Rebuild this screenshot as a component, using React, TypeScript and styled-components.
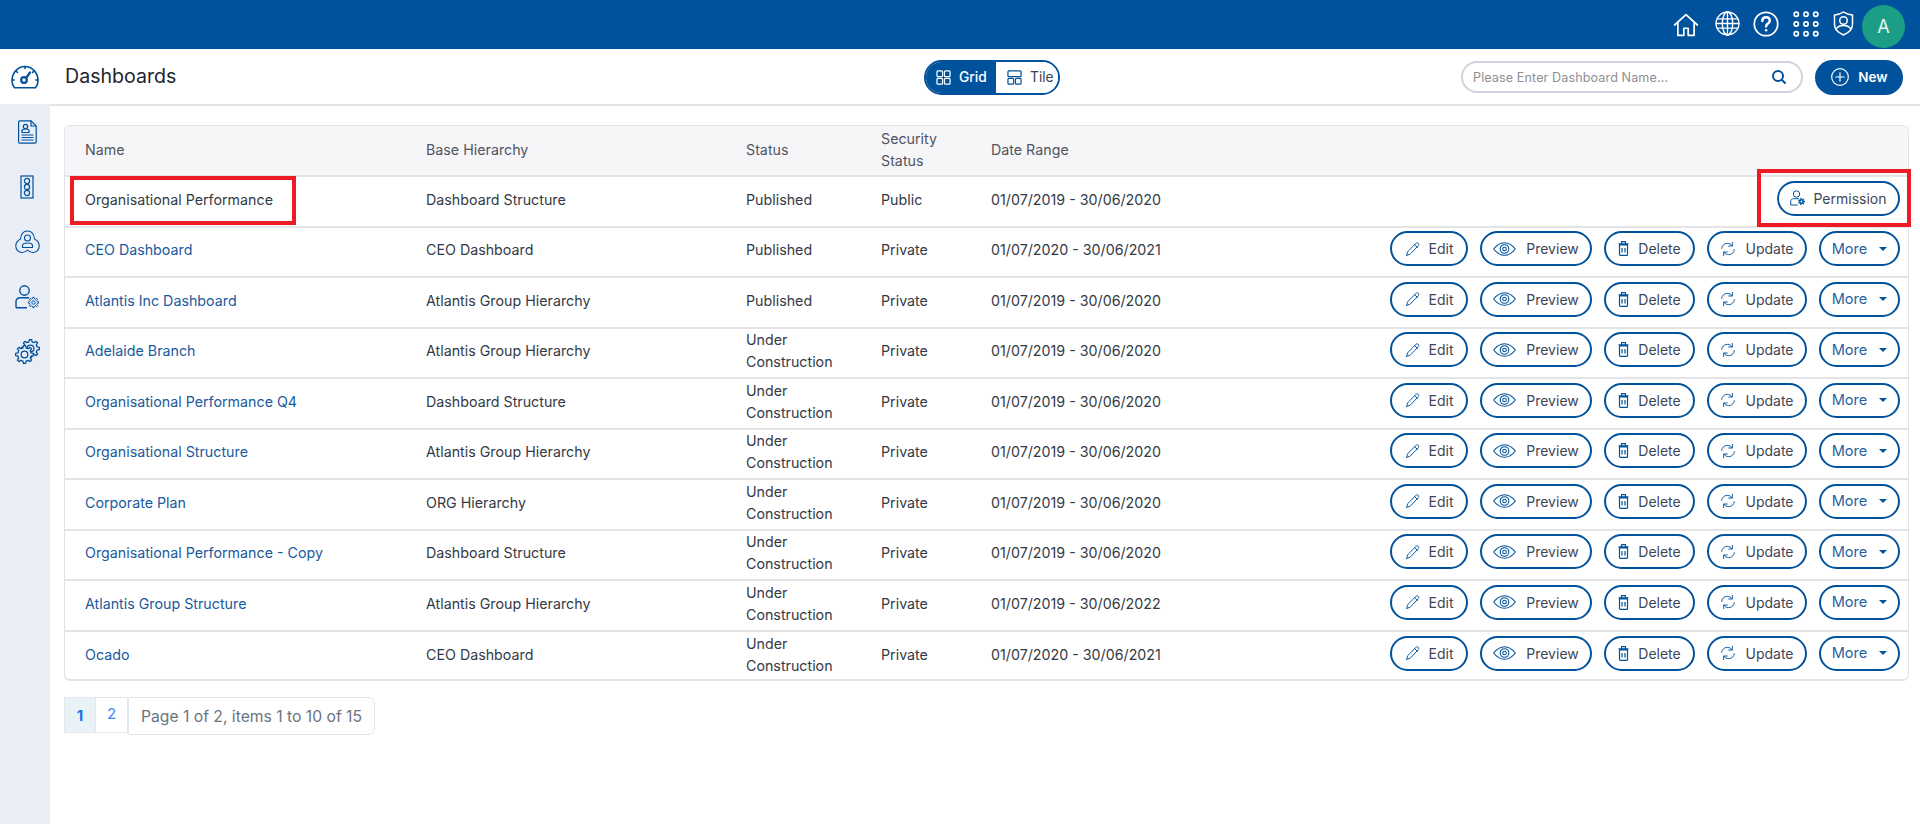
import React from "react";
import styled, { createGlobalStyle } from "styled-components";

const BLUE = "#00529c";
const SIDE_BG = "#e9edf6";

const Global = createGlobalStyle`
  html, body { margin: 0; padding: 0; height: 100%; background: #fff; }
  body { font-family: Inter, "Liberation Sans", sans-serif; font-size: 14.25px; color: #333a45; }
  #root { height: 100%; }
  * { box-sizing: border-box; }
`;

const Page = styled.div`
  position: relative;
  display: flex;
  flex-direction: column;
  height: 824px;
  overflow: hidden;
`;

const TopBar = styled.header`
  height: 49px;
  flex: none;
  background: ${BLUE};
  display: flex;
  align-items: center;
  justify-content: flex-end;
  padding-right: 15px;
`;

const TopIcon = styled.span<{ $w: number; $lift?: number }>`
  display: flex;
  justify-content: center;
  width: ${(p) => p.$w}px;
  margin-top: ${(p) => p.$lift ?? -2}px;
  color: #fff;
`;

const Avatar = styled.div`
  width: 43px;
  height: 43px;
  margin-top: 3px;
  border-radius: 50%;
  background: #1b9e85;
  color: #e8f6f3;
  display: flex;
  align-items: center;
  justify-content: center;
  font-size: 18px;
`;

const HeadRow = styled.div`
  height: 57px;
  flex: none;
  display: flex;
`;

const GaugeCell = styled.div`
  width: 50px;
  flex: none;
  display: flex;
  align-items: flex-start;
  justify-content: center;
  padding: 16px 0 0 0;
  color: ${BLUE};
`;

const HeadMain = styled.div`
  flex: 1;
  display: grid;
  grid-template-columns: 1fr auto 1fr;
  align-items: center;
  border-bottom: 2px solid #e4e4e7;
  padding: 1px 17px 0 15px;
`;

const Title = styled.h1`
  margin: -2px 0 0;
  font-size: 19.6px;
  font-weight: 400;
  color: #22262e;
`;

const Toggle = styled.div`
  display: flex;
  width: 136px;
  height: 35px;
  border: 2px solid ${BLUE};
  border-radius: 18px;
  overflow: hidden;
  margin-left: 16px;
`;

const ToggleItem = styled.div<{ $on?: boolean }>`
  display: flex;
  align-items: center;
  gap: 8px;
  padding-left: ${(p) => (p.$on ? 10 : 11)}px;
  width: ${(p) => (p.$on ? 70 : 62)}px;
  background: ${(p) => (p.$on ? BLUE : "#fff")};
  color: ${(p) => (p.$on ? "#fff" : "#3b4252")};
  font-size: 13.8px;
  font-weight: ${(p) => (p.$on ? 500 : 400)};
`;

const HeadRight = styled.div`
  display: flex;
  justify-content: flex-end;
  align-items: center;
  gap: 12px;
`;

const Search = styled.div`
  width: 342px;
  height: 32px;
  border: 2px solid #cfd5de;
  border-radius: 16px;
  display: flex;
  align-items: center;
  justify-content: space-between;
  padding: 0 14px 0 10px;
  font-size: 12.6px;
  color: #8f8f94;
  letter-spacing: 0.1px;
`;

const NewButton = styled.button`
  width: 88px;
  height: 35px;
  border: 0;
  border-radius: 18px;
  background: ${BLUE};
  color: #fff;
  display: flex;
  align-items: center;
  justify-content: center;
  gap: 8px;
  font: 600 13.5px Inter, sans-serif;
`;

const Body = styled.div`
  flex: 1;
  display: flex;
  min-height: 0;
`;

const Sidebar = styled.nav`
  width: 50px;
  flex: none;
  margin-top: -2px;
  background: ${SIDE_BG};
  display: flex;
  flex-direction: column;
  align-items: center;
  color: ${BLUE};
  padding: 9px 0 0 4px;
  gap: 18px;
`;

const SideIcon = styled.span`
  display: flex;
  height: 37px;
  align-items: center;
`;

const Main = styled.main`
  flex: 1;
  padding: 19px 11px 0 14px;
  min-width: 0;
`;

const Card = styled.div`
  border: 1px solid #e2e3e8;
  border-bottom-width: 2px;
  border-radius: 6px;
  overflow: hidden;
`;

const columns = "341px 320px 135px 110px 300px 1fr";

const HeaderRow = styled.div`
  display: grid;
  grid-template-columns: ${columns};
  height: 51px;
  padding-bottom: 1px;
  align-items: center;
  background: #f6f6f9;
  border-bottom: 2px solid #e4e4e7;
  color: #50555f;
`;

const Row = styled.div`
  display: grid;
  grid-template-columns: ${columns};
  height: 50.5px;
  padding-bottom: 3px;
  align-items: center;
  border-bottom: 2px solid #e4e4e7;
  &:last-child { border-bottom: 0; height: 47.5px; padding-bottom: 1px; }
`;

const Cell = styled.div`
  padding-left: 20px;
  line-height: 22px;
`;

const NameCell = styled(Cell)<{ $link?: boolean }>`
  color: ${(p) => (p.$link ? "#1a5a9e" : "#333a45")};
`;

const Actions = styled.div`
  display: flex;
  justify-content: flex-end;
  gap: 12px;
  padding-right: 8px;
  margin-top: -3px;
`;

const Pill = styled.button<{ $w: number; $gap?: number; $blue?: boolean }>`
  width: ${(p) => p.$w}px;
  height: 35px;
  border: 2px solid ${BLUE};
  border-radius: 18px;
  background: #fff;
  display: flex;
  align-items: center;
  justify-content: center;
  gap: ${(p) => p.$gap ?? 8}px;
  padding: 0;
  flex: none;
  font: 400 ${(p) => (p.$blue ? 14.6 : 14)}px Inter, sans-serif;
  color: ${(p) => (p.$blue ? "#2a5f9e" : "#3e4656")};
  svg { color: ${BLUE}; flex: none; }
`;

const Pager = styled.div`
  display: flex;
  align-items: flex-start;
  margin-top: 16px;
`;

const PageNum = styled.div<{ $on?: boolean }>`
  width: 32px;
  height: 36px;
  display: flex;
  align-items: center;
  justify-content: center;
  border: 1px solid #e2e5ec;
  border-left-width: ${(p) => (p.$on ? 1 : 0)}px;
  background: ${(p) => (p.$on ? "#e9f2f6" : "#fff")};
  color: ${(p) => (p.$on ? "#1672ee" : "#3d8af2")};
  font-weight: ${(p) => (p.$on ? 700 : 400)};
  font-size: 15px;
  padding-bottom: ${(p) => (p.$on ? 0 : 3)}px;
`;

const PageInfo = styled.div`
  width: 247px;
  height: 38px;
  display: flex;
  align-items: center;
  justify-content: center;
  border: 1px solid #e2e5ec;
  border-radius: 0 6px 6px 0;
  color: #6b7380;
  font-size: 15.7px;
`;

const RedBox = styled.div<{ $x: number; $y: number; $w: number; $h: number }>`
  position: absolute;
  left: ${(p) => p.$x}px;
  top: ${(p) => p.$y}px;
  width: ${(p) => p.$w}px;
  height: ${(p) => p.$h}px;
  border: 4px solid #ed1c24;
  pointer-events: none;
`;

const Svg = ({ s = 20, children, w = 1.5 }: { s?: number; children: React.ReactNode; w?: number }) => (
  <svg width={s} height={s} viewBox="0 0 24 24" fill="none" stroke="currentColor" strokeWidth={w} strokeLinecap="round" strokeLinejoin="round">
    {children}
  </svg>
);

function gearPath(cx: number, cy: number, ro: number, ri: number, teeth: number) {
  const pts: string[] = [];
  const step = (Math.PI * 2) / teeth;
  for (let i = 0; i < teeth; i++) {
    const a = i * step;
    const offs: [number, number][] = [
      [-0.3, ri],
      [-0.16, ro],
      [0.16, ro],
      [0.3, ri],
    ];
    offs.forEach(([o, r]) => {
      const t = a + o * step;
      pts.push(`${(cx + r * Math.cos(t)).toFixed(2)} ${(cy + r * Math.sin(t)).toFixed(2)}`);
    });
  }
  return `M${pts.join("L")}Z`;
}

const HomeIcon = () => (
  <Svg s={26} w={1.6}>
    <path d="M1.500 12 12 2.500 22.500 12M4.500 10v11.500h5.500v-6.500h4v6.500h5.500V10" />
  </Svg>
);
const GlobeIcon = () => (
  <Svg s={25} w={1.3}>
    <circle cx="12" cy="12" r="11" />
    <ellipse cx="12" cy="12" rx="5" ry="11" />
    <path d="M12 1v22M2.400 7.500h19.200M2.400 16.500h19.200M1 12h22" />
  </Svg>
);
const HelpIcon = () => (
  <Svg s={26} w={1.6}>
    <circle cx="12" cy="12" r="10.800" />
    <path d="M8.600 9.200c0-2 1.500-3.400 3.500-3.400s3.400 1.300 3.400 3.100c0 2.600-3.400 2.700-3.400 5.300" strokeWidth="2.200" />
    <circle cx="12.100" cy="17.800" r="1.200" fill="currentColor" stroke="none" />
  </Svg>
);
const DotsIcon = () => (
  <Svg s={26} w={1.5}>
    {[3, 12, 21].map((y) =>
      [3, 12, 21].map((x) => <circle key={`${x}-${y}`} cx={x} cy={y} r="2" />)
    )}
  </Svg>
);
const ShieldIcon = () => (
  <svg width="21" height="25" viewBox="0 0 21 25" fill="none" stroke="currentColor" strokeWidth="1.500" strokeLinejoin="round">
    <path d="M10.500 1c2.500 1.800 5 2.600 9 2.900v9.600c0 4.800-3.800 8.300-9 10.500-5.200-2.200-9-5.700-9-10.500V3.900c4-.3 6.500-1.100 9-2.900Z" />
    <circle cx="10.500" cy="9.500" r="3.800" />
    <path d="M3 18.500c1.200-2.700 4-4 7.500-4s6.300 1.300 7.500 4" />
  </svg>
);
const SearchIcon = () => (
  <svg width="16" height="16" viewBox="0 0 16 16" fill="none" stroke={BLUE} strokeWidth="2" strokeLinecap="round">
    <circle cx="7" cy="7" r="5" />
    <path d="m11 11 3 3" />
  </svg>
);
const PlusCircleIcon = () => (
  <Svg s={20} w={1.4}>
    <circle cx="12" cy="12" r="10" />
    <path d="M12 7v10M7 12h10" />
  </Svg>
);
const GridIcon = () => (
  <svg width="15" height="15" viewBox="0 0 16 16" fill="none" stroke="currentColor" strokeWidth="1.300">
    <rect x="1" y="1" width="6" height="6" rx="1" />
    <rect x="9" y="1" width="6" height="6" rx="1" />
    <rect x="1" y="9" width="6" height="6" rx="1" />
    <rect x="9" y="9" width="6" height="6" rx="1" />
  </svg>
);
const TileIcon = () => (
  <svg width="15" height="15" viewBox="0 0 16 16" fill="none" stroke={BLUE} strokeWidth="1.300">
    <rect x="1" y="1" width="14" height="6" rx="1" />
    <rect x="1" y="9" width="6" height="6" rx="1" />
    <rect x="9" y="9" width="6" height="6" rx="1" />
  </svg>
);
const GaugeIcon = () => (
  <svg width="28" height="24" viewBox="0 0 28 24" fill="none" stroke="currentColor" strokeWidth="1.600" strokeLinecap="round" strokeLinejoin="round">
    <path d="M3.500 22.800C1.800 20.800 1 18.300 1 15.500 1 7.800 6.800 1.500 14 1.500S27 7.800 27 15.500c0 2.800-.8 5.300-2.500 7.300Z" />
    <circle cx="13" cy="15" r="2.800" strokeWidth="2.200" />
    <path d="m15.500 12.500 3.500-5" strokeWidth="2.200" />
    <path d="M1 15h2.200M24.800 15H27M14 1.500v2M5 6l1.500 1.500M23 6l-1.500 1.500" />
  </svg>
);
const DocIcon = () => (
  <svg width="19" height="24" viewBox="0 0 19 24" fill="none" stroke="currentColor" strokeWidth="1.200">
    <path d="M1.500.8h11.500l5.200 5.200v16a1.200 1.200 0 0 1-1.200 1.200H1.800A1.200 1.200 0 0 1 .6 22V1.700Z" />
    <path d="M13 .8V6h5.200" />
    <circle cx="7.500" cy="6.500" r="2.200" />
    <path d="M4 12.500v-1.800c0-1 1-1.700 3.500-1.700s3.500.7 3.500 1.700v1.800ZM3.500 15h12M3.500 17.500h12M3.500 20h12" />
  </svg>
);
const TrafficIcon = () => (
  <svg width="14" height="24" viewBox="0 0 14 24" fill="none" stroke="currentColor" strokeWidth="1.200">
    <rect x="1" y="1" width="12" height="22" />
    <circle cx="7" cy="6" r="2.600" />
    <circle cx="7" cy="12" r="2.600" />
    <circle cx="7" cy="18" r="2.600" />
  </svg>
);
const OrgIcon = () => (
  <svg width="25" height="24" viewBox="0 0 25 24" fill="none" stroke="currentColor" strokeWidth="1.100">
    <path d="M5.500 9C6 3.500 9 1 12.500 1S19 3.500 19.500 9c3 1.500 4.700 4 4.700 7 0 3.800-2.700 6.500-6.200 6.500-2.200 0-4-1-5.500-2.300-1.500 1.300-3.300 2.300-5.500 2.300C3.500 22.500.8 19.800.8 16c0-3 1.700-5.500 4.700-7Z" />
    <circle cx="12.500" cy="8" r="3" />
    <path d="M7.500 17.500v-1.800c0-1.700 2-2.700 5-2.700s5 1 5 2.700v1.800Z" />
  </svg>
);
const UserCogIcon = () => (
  <svg width="24" height="24" viewBox="0 0 24 24" fill="none" stroke="currentColor" strokeWidth="1.400" strokeLinejoin="round">
    <circle cx="9.500" cy="5.500" r="4.700" />
    <path d="M1 22.800v-6c0-2.500 2-4 4.500-4h8.500M1 22.800h11" />
    <path d={gearPath(18.500, 17.500, 5.200, 3.900, 8)} strokeWidth="1" />
    <circle cx="18.500" cy="17.500" r="1.700" strokeWidth="1" />
  </svg>
);
const GearIcon = () => (
  <svg width="25" height="25" viewBox="0 0 25 25" fill={SIDE_BG} stroke="currentColor" strokeWidth="1.300" strokeLinejoin="round">
    <path d={gearPath(15.500, 9.500, 9, 6.800, 8)} />
    <circle cx="15.500" cy="9.500" r="3.400" />
    <path d={gearPath(9.500, 15.500, 9, 6.800, 8)} />
    <circle cx="9.500" cy="15.500" r="3.300" />
  </svg>
);
const PencilIcon = () => (
  <Svg s={16} w={1.400}>
    <path d="M2.500 21.500l1.500-5.500L16.500 3.500c1-1 2.500-1 3.500 0s1 2.500 0 3.500L7.500 20 2.500 21.500ZM14.500 5.500l4 4" />
  </Svg>
);
const EyeIcon = () => (
  <svg width="23" height="14" viewBox="0 0 23 14" fill="none" stroke="currentColor" strokeWidth="1.100">
    <path d="M.7 7c3-4 6.700-6.300 10.800-6.300S19.300 3 22.300 7c-3 4-6.700 6.300-10.800 6.300S3.700 11 .7 7Z" />
    <circle cx="11.500" cy="7" r="4.300" />
    <circle cx="11.500" cy="7" r="1.800" />
  </svg>
);
const TrashIcon = () => (
  <svg width="11" height="15" viewBox="0 0 11 15" fill="none" stroke="currentColor" strokeWidth="1.200" strokeLinejoin="round">
    <path d="M1.500 4h8v9.500a.9.900 0 0 1-.9.900H2.400a.9.900 0 0 1-.9-.9ZM.5 2.800h10M3.500 2.800V.7h4v2.100M4 7v4.500M7 7v4.500" />
  </svg>
);
const RefreshIcon = () => (
  <Svg s={16} w={1.400}>
    <path d="M2.500 11c.5-4.500 4-7.500 8.500-7.500 3 0 5.500 1.300 7 3.800M18.500 2v5.500H13M21.500 13c-.5 4.500-4 7.500-8.500 7.500-3 0-5.500-1.300-7-3.800M5.500 22v-5.500H11" />
  </Svg>
);
const UserGearIcon = () => (
  <svg width="15" height="16" viewBox="0 0 15 16" fill="none" stroke="currentColor" strokeWidth="1" strokeLinejoin="round">
    <circle cx="6.500" cy="4" r="3.200" />
    <path d="M.7 15v-3.500c0-1.800 1.300-2.800 3-2.800h5M.7 15h7" />
    <path d={gearPath(11.500, 11.500, 3.300, 2.300, 7)} fill="currentColor" strokeWidth=".6" />
    <circle cx="11.500" cy="11.500" r=".9" fill="#fff" stroke="none" />
  </svg>
);
const Caret = styled.span`
  width: 0;
  height: 0;
  margin-left: 6px;
  border-left: 4px solid transparent;
  border-right: 4px solid transparent;
  border-top: 4px solid ${BLUE};
`;

const U = "Under Construction";
const rows = [
  ["CEO Dashboard", "CEO Dashboard", "Published", "01/07/2020 - 30/06/2021"],
  ["Atlantis Inc Dashboard", "Atlantis Group Hierarchy", "Published", "01/07/2019 - 30/06/2020"],
  ["Adelaide Branch", "Atlantis Group Hierarchy", U, "01/07/2019 - 30/06/2020"],
  ["Organisational Performance Q4", "Dashboard Structure", U, "01/07/2019 - 30/06/2020"],
  ["Organisational Structure", "Atlantis Group Hierarchy", U, "01/07/2019 - 30/06/2020"],
  ["Corporate Plan", "ORG Hierarchy", U, "01/07/2019 - 30/06/2020"],
  ["Organisational Performance - Copy", "Dashboard Structure", U, "01/07/2019 - 30/06/2020"],
  ["Atlantis Group Structure", "Atlantis Group Hierarchy", U, "01/07/2019 - 30/06/2022"],
  ["Ocado", "CEO Dashboard", U, "01/07/2020 - 30/06/2021"],
];

export default function App() {
  return (
    <Page>
      <Global />
      <TopBar>
        <TopIcon $w={48} $lift={1}><HomeIcon /></TopIcon>
        <TopIcon $w={35}><GlobeIcon /></TopIcon>
        <TopIcon $w={42}><HelpIcon /></TopIcon>
        <TopIcon $w={37}><DotsIcon /></TopIcon>
        <TopIcon $w={38}><ShieldIcon /></TopIcon>
        <Avatar>A</Avatar>
      </TopBar>
      <HeadRow>
        <GaugeCell><GaugeIcon /></GaugeCell>
        <HeadMain>
          <Title>Dashboards</Title>
          <Toggle>
            <ToggleItem $on><GridIcon />Grid</ToggleItem>
            <ToggleItem><TileIcon />Tile</ToggleItem>
          </Toggle>
          <HeadRight>
            <Search>Please Enter Dashboard Name...<SearchIcon /></Search>
            <NewButton><PlusCircleIcon />New</NewButton>
          </HeadRight>
        </HeadMain>
      </HeadRow>
      <Body>
        <Sidebar>
          <SideIcon><DocIcon /></SideIcon>
          <SideIcon><TrafficIcon /></SideIcon>
          <SideIcon><OrgIcon /></SideIcon>
          <SideIcon><UserCogIcon /></SideIcon>
          <SideIcon><GearIcon /></SideIcon>
        </Sidebar>
        <Main>
          <Card>
            <HeaderRow>
              <Cell>Name</Cell>
              <Cell>Base Hierarchy</Cell>
              <Cell>Status</Cell>
              <Cell>Security<br />Status</Cell>
              <Cell>Date Range</Cell>
            </HeaderRow>
            <Row>
              <NameCell>Organisational Performance</NameCell>
              <Cell>Dashboard Structure</Cell>
              <Cell>Published</Cell>
              <Cell>Public</Cell>
              <Cell>01/07/2019 - 30/06/2020</Cell>
              <Actions>
                <Pill $w={123}><UserGearIcon />Permission</Pill>
              </Actions>
            </Row>
            {rows.map((r) => (
              <Row key={r[0]}>
                <NameCell $link>{r[0]}</NameCell>
                <Cell>{r[1]}</Cell>
                <Cell>{r[2]}</Cell>
                <Cell>Private</Cell>
                <Cell>{r[3]}</Cell>
                <Actions>
                  <Pill $w={78}><PencilIcon />Edit</Pill>
                  <Pill $w={112} $gap={10}><EyeIcon />Preview</Pill>
                  <Pill $w={91} $gap={9}><TrashIcon />Delete</Pill>
                  <Pill $w={100} $gap={9}><RefreshIcon />Update</Pill>
                  <Pill $w={81} $gap={6} $blue>More<Caret /></Pill>
                </Actions>
              </Row>
            ))}
          </Card>
          <Pager>
            <PageNum $on>1</PageNum>
            <PageNum>2</PageNum>
            <PageInfo>Page 1 of 2, items 1 to 10 of 15</PageInfo>
          </Pager>
        </Main>
      </Body>
      <RedBox $x={70} $y={176} $w={226} $h={49} />
      <RedBox $x={1757} $y={169} $w={154} $h={58} />
    </Page>
  );
}
